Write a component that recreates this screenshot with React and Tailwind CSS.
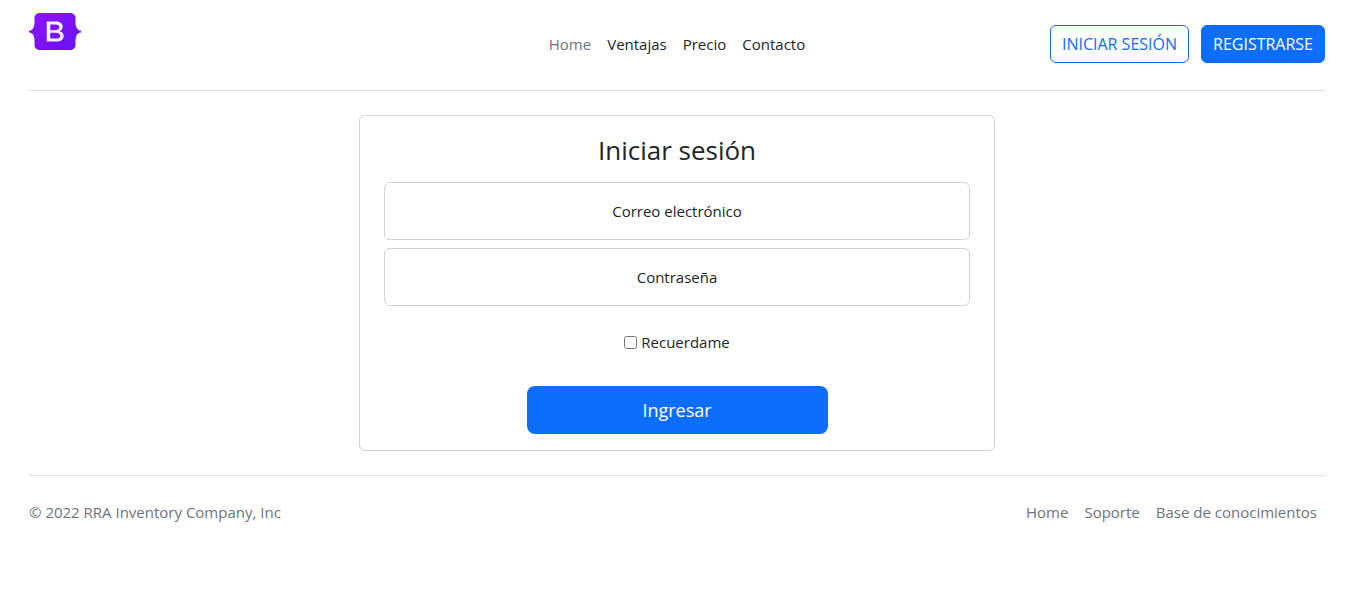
const navLinks = ['Home', 'Ventajas', 'Precio', 'Contacto'];
const footerLinks = ['Home', 'Soporte', 'Base de conocimientos'];

function Logo() {
  return (
    <svg viewBox="0 0 104 74" className="h-[37px] w-[52px]" role="img" aria-label="Bootstrap">
      <defs>
        <linearGradient id="logo-body" x1="0" y1="0" x2="1" y2="1">
          <stop offset="0" stopColor="#9013fe" />
          <stop offset="1" stopColor="#6610f2" />
        </linearGradient>
        <linearGradient id="logo-letter" x1="0" y1="0" x2="1" y2="1">
          <stop offset="0" stopColor="#ffffff" />
          <stop offset="1" stopColor="#f1e5fc" />
        </linearGradient>
      </defs>
      <path
        fill="url(#logo-body)"
        d="M22 0C15 0 10 5 11 12C11.400 19 11 25 9 29C7.500 33 4.500 35 0 35.500V39C4.500 39.500 7.500 41.500 9 45C11 50 11.400 55 11 62C10 69 15 74 22 74H82C89 74 94 69 93 62C92.600 55 93 50 95 45C96.500 41.500 99.500 39.500 104 39V35.500C99.500 35 96.500 33 95 29C93 25 92.600 19 93 12C94 5 89 0 82 0Z"
      />
      <path
        fill="url(#logo-letter)"
        fillRule="evenodd"
        d="M35.500 17H53.500C62 17 67.500 21 67.500 27.500C67.500 32 64.500 35.500 60.500 36.200V36.500C66 37 69.500 41 69.500 46C69.500 53 64 57 54.500 57H35.500ZM42.500 22.800V34.300H51C57 34.300 60.500 32.300 60.500 28.400C60.500 24.800 57.800 22.800 52.700 22.800ZM42.500 39.500V51.200H53C59 51.200 62.300 49.300 62.300 45.300C62.300 41.500 59 39.500 52.300 39.500Z"
      />
    </svg>
  );
}

function Field({ id, type, label }) {
  return (
    <div className="relative">
      <input
        id={id}
        type={type}
        placeholder=" "
        className="peer h-[58px] w-full rounded-md border border-[#ced4da] bg-white px-3 text-center outline-none focus:border-[#86b7fe]"
      />
      <label
        htmlFor={id}
        className="pointer-events-none absolute inset-0 hidden items-center justify-center peer-placeholder-shown:flex"
      >
        {label}
      </label>
    </div>
  );
}

export default function App() {
  return (
    <div className="bg-white pr-[37px] pl-[29px] font-['Open_Sans',sans-serif] text-[15px] leading-6 text-[#212529]">
      <header className="grid grid-cols-[1fr_auto_1fr] items-center border-b border-[#dee2e6] pt-3 pb-[14px]">
        <a href="#" className="mt-px self-start justify-self-start">
          <Logo />
        </a>
        <nav className="flex gap-4 py-5">
          {navLinks.map((name, i) => (
            <a key={name} href="#" className={i === 0 ? 'text-[#6c757d]' : 'text-[#212529]'}>
              {name}
            </a>
          ))}
        </nav>
        <div className="flex justify-end gap-3 text-base">
          <button type="button" className="rounded-md border border-[#0d6efd] px-[11px] py-1.5 text-[#0d6efd]">
            INICIAR SESIÓN
          </button>
          <button type="button" className="rounded-md border border-[#0d6efd] bg-[#0d6efd] px-[11px] py-1.5 text-white">
            REGISTRARSE
          </button>
        </div>
      </header>

      <main className="py-6">
        <form
          className="mx-auto flex w-full max-w-[636px] flex-col rounded-md border border-[#ced4da] px-6 py-4"
          onSubmit={(e) => e.preventDefault()}
        >
          <h1 className="mb-[14px] text-center text-[26px] leading-9">Iniciar sesión</h1>
          <div className="flex flex-col gap-2">
            <Field id="email" type="email" label="Correo electrónico" />
            <Field id="password" type="password" label="Contraseña" />
          </div>
          <label className="mt-6 mb-8 flex items-center justify-center gap-1">
            <input type="checkbox" className="size-[13px]" />
            Recuerdame
          </label>
          <button type="submit" className="h-12 w-[301px] max-w-full self-center rounded-lg bg-[#0d6efd] text-lg text-white">
            Ingresar
          </button>
        </form>
      </main>

      <footer className="flex items-center justify-between border-t border-[#dee2e6] py-6 text-[#6c757d]">
        <p>© 2022 RRA Inventory Company, Inc</p>
        <nav className="flex gap-4 pr-2">
          {footerLinks.map((name) => (
            <a key={name} href="#">
              {name}
            </a>
          ))}
        </nav>
      </footer>
    </div>
  );
}
